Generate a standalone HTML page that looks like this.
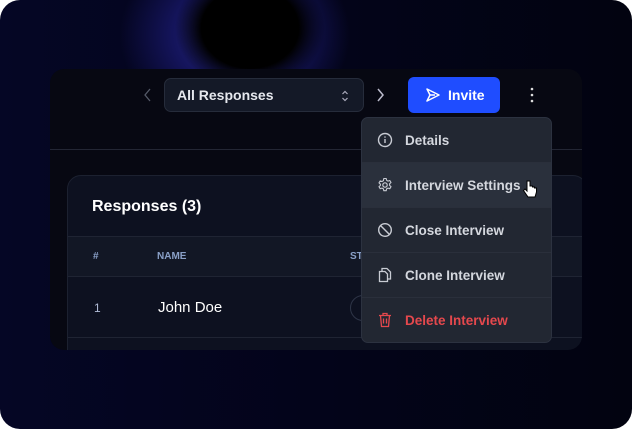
<!DOCTYPE html>
<html><head><style>
*{margin:0;padding:0;box-sizing:border-box}
html,body{width:632px;height:429px;background:#fff;overflow:hidden;font-family:"Liberation Sans",sans-serif}
.frame{position:absolute;left:0;top:0;width:632px;height:429px;border-radius:20px;overflow:hidden;
background:radial-gradient(ellipse 75px 62px at 250px 28px,#000 65%,transparent 100%),radial-gradient(ellipse 115px 95px at 235px 35px,#2c2c8c 0%,#14145a 55%,transparent 100%),linear-gradient(90deg,#050625 0%,#03041a 50%,#020310 100%)}
.panel{position:absolute;left:50px;top:69px;width:532px;height:281px;background:#070812;border-radius:14px;overflow:hidden}
.sep{position:absolute;left:0;right:0;top:80px;height:1px;background:#232634}
.sel{position:absolute;left:114px;top:9px;width:200px;height:34px;background:#141927;border:1px solid #262c3b;border-radius:7px;color:#e6e8ee;font-size:14px;font-weight:bold;line-height:32px;padding-left:12px}
.inv{position:absolute;left:358px;top:8px;width:92px;height:36px;background:#1f4dff;border-radius:6px;color:#fff;font-weight:bold;font-size:14px;line-height:36px;padding-left:40px}
.card{position:absolute;left:17px;top:106px;width:520px;height:200px;background:#0d1120;border:1px solid #1c2130;border-radius:14px}
.menu{position:absolute;left:361px;top:117px;width:191px;height:226px;background:#222732;border:1px solid #2c3240;border-radius:7px;overflow:hidden}
.it{height:45px;border-bottom:1px solid #2a2f3b;color:#d4d7de;font-size:13.5px;font-weight:bold;line-height:45px;padding-left:43px;position:relative}
.it svg{position:absolute;left:15px;top:14px}
</style></head><body>
<div class="frame">
<div class="panel">
<svg style="position:absolute;left:93px;top:19px" width="10" height="14"><path d="M7 1L2 7l5 6" stroke="#555a68" fill="none" stroke-width="1.3"/></svg>
<div class="sel">All Responses
<svg style="position:absolute;right:14px;top:11px" width="8" height="12"><path d="M1.5 4l2.5-2.5L6.5 4M1.5 8l2.5 2.5L6.5 8" stroke="#aab" fill="none" stroke-width="1.2"/></svg></div>
<svg style="position:absolute;left:325px;top:19px" width="10" height="14"><path d="M3 1l5 6-5 6" stroke="#bbc" fill="none" stroke-width="1.5"/></svg>
<div class="inv"><svg style="position:absolute;left:17px;top:10px" width="16" height="16"><path d="M2 2l12 6-12 6 3-6z M5 8h5" stroke="#fff" fill="none" stroke-width="1.5" stroke-linejoin="round"/></svg>Invite</div>
<svg style="position:absolute;left:480px;top:18px" width="4" height="16"><circle cx="2" cy="2" r="1.3" fill="#ddd"/><circle cx="2" cy="8" r="1.3" fill="#ddd"/><circle cx="2" cy="14" r="1.3" fill="#ddd"/></svg>
<div class="sep"></div>
<div class="card">
<div style="position:absolute;left:24px;top:22px;color:#fff;font-weight:bold;font-size:16px">Responses (3)</div>
<div style="position:absolute;left:0;right:0;top:60px;height:41px;background:#121725;border-top:1px solid #1f2433;border-bottom:1px solid #1f2433"></div>
<div style="position:absolute;left:25px;top:75px;color:#8aa0c8;font-size:10px;font-weight:bold">#</div>
<div style="position:absolute;left:89px;top:75px;color:#8aa0c8;font-size:10px;font-weight:bold">NAME</div>
<div style="position:absolute;left:282px;top:75px;color:#8aa0c8;font-size:10px;font-weight:bold">ST</div>
<div style="position:absolute;left:26px;top:125px;color:#b0bbd6;font-size:12px">1</div>
<div style="position:absolute;left:90px;top:123px;color:#fff;font-size:15px">John Doe</div>
<div style="position:absolute;left:282px;top:119px;width:30px;height:26px;border:1px solid #2e3547;border-radius:13px"></div>
<div style="position:absolute;left:0;right:0;top:161px;height:1px;background:#1f2433"></div>
</div>
</div>
<div class="menu">
<div class="it"><svg width="16" height="16"><circle cx="8" cy="8" r="6.5" stroke="#c8cbd3" fill="none" stroke-width="1.4"/><path d="M8 7v4" stroke="#c8cbd3" stroke-width="1.4"/><circle cx="8" cy="5" r=".8" fill="#c8cbd3"/></svg>Details</div>
<div class="it" style="background:#2a303c"><svg width="16" height="16"><circle cx="8" cy="8" r="2.2" stroke="#c8cbd3" fill="none" stroke-width="1.2"/><path d="M6.8 1.5h2.4l.4 1.8 1.4.8 1.8-.6 1.2 2-1.4 1.3v1.6l1.4 1.3-1.2 2-1.8-.6-1.4.8-.4 1.8H6.8l-.4-1.8-1.4-.8-1.8.6-1.2-2 1.4-1.3V7.2L2 5.9l1.2-2 1.8.6 1.4-.8z" stroke="#c8cbd3" fill="none" stroke-width="1.1" stroke-linejoin="round"/></svg>Interview Settings
<svg style="position:absolute;left:160px;top:16px" width="16" height="22"><path d="M5 2v10l-2-2-1.5 1.5L6 18h7l1.5-5V9h-2V8h-2V7H8V2z" fill="#fff" stroke="#000" stroke-width="1"/></svg></div>
<div class="it"><svg width="16" height="16"><circle cx="8" cy="8" r="6.3" stroke="#c8cbd3" fill="none" stroke-width="1.4"/><path d="M3.5 3.5l9 9" stroke="#c8cbd3" stroke-width="1.4"/></svg>Close Interview</div>
<div class="it"><svg width="16" height="16"><path d="M5 4V1.5h5l3.5 3.5v7H11M2.5 4.5h5.5l2.5 2.5v7.5h-8z" stroke="#c8cbd3" fill="none" stroke-width="1.3"/></svg>Clone Interview</div>
<div class="it" style="color:#e5484d;border:none"><svg width="16" height="16"><path d="M2 3.5h12M6 3.5V1.5h4v2M3.5 3.5l1 11h7l1-11M6.5 6.5v5M9.5 6.5v5" stroke="#e5484d" fill="none" stroke-width="1.3"/></svg>Delete Interview</div>
</div>
</div>
</body></html>
